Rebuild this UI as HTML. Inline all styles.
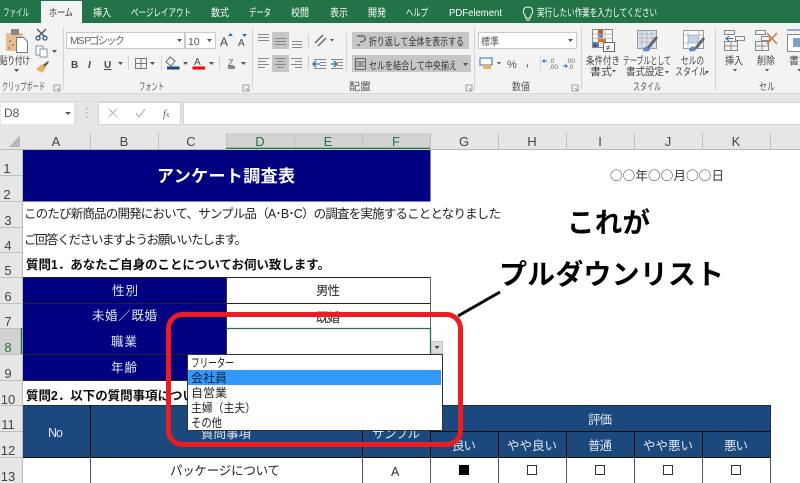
<!DOCTYPE html>
<html lang="ja"><head><meta charset="utf-8"><style>
html,body{margin:0;padding:0;background:#fff;width:800px;height:483px;overflow:hidden}
svg{display:block}
text{font-family:"Liberation Sans","Noto Sans CJK JP",sans-serif;white-space:pre}
.r{font-size:10px;fill:#444}
.h{font-size:13px;fill:#444;text-anchor:middle;font-family:"Liberation Sans",sans-serif}
.s{font-size:12.5px;fill:#222}
.w{font-size:12.5px;fill:#dfe6f2}
.a{fill:#555}
</style></head><body>
<svg width="800" height="483" viewBox="0 0 800 483" xmlns="http://www.w3.org/2000/svg">
<defs><filter id="b" x="0" y="0" width="100%" height="100%"><feGaussianBlur stdDeviation="0.35"/></filter></defs>
<rect width="800" height="483" fill="#fff"/>
<g filter="url(#b)">
<!-- title bar -->
<rect width="800" height="23" fill="#217346"/>
<rect x="41" y="1" width="41" height="23" fill="#f3f3f3"/>
<g font-size="10.5" fill="#fff">
<text x="3" y="16" textLength="26" lengthAdjust="spacingAndGlyphs" fill="#eef5f0">ファイル</text>
<text x="49" y="16" textLength="24" lengthAdjust="spacingAndGlyphs" style="fill:#333">ホーム</text>
<text x="93" y="16" textLength="18" lengthAdjust="spacingAndGlyphs">挿入</text>
<text x="131" y="16" textLength="60" lengthAdjust="spacingAndGlyphs">ページレイアウト</text>
<text x="211" y="16" textLength="18" lengthAdjust="spacingAndGlyphs">数式</text>
<text x="249" y="16" textLength="22" lengthAdjust="spacingAndGlyphs">データ</text>
<text x="291" y="16" textLength="18" lengthAdjust="spacingAndGlyphs">校閲</text>
<text x="330" y="16" textLength="18" lengthAdjust="spacingAndGlyphs">表示</text>
<text x="368" y="16" textLength="18" lengthAdjust="spacingAndGlyphs">開発</text>
<text x="406" y="16" textLength="22" lengthAdjust="spacingAndGlyphs">ヘルプ</text>
<text x="449" y="16" textLength="53" lengthAdjust="spacingAndGlyphs">PDFelement</text>
<text x="537" y="16" textLength="120" lengthAdjust="spacingAndGlyphs">実行したい作業を入力してください</text>
</g>
<path d="M525 15c-3-3-2-8 3-8s6 5 3 8l-.5 3h-5zM526 20h4" fill="none" stroke="#fff"/>
<!-- ribbon -->
<rect y="23" width="800" height="70" fill="#f3f3f3"/>
<rect y="93" width="800" height="40" fill="#e6e6e6"/>
<g fill="#d4d4d4"><rect x="63" y="27" width="1" height="63"/><rect x="252" y="27" width="1" height="63"/><rect x="474" y="27" width="1" height="63"/><rect x="581" y="27" width="1" height="63"/><rect x="715" y="27" width="1" height="63"/></g>
<!-- clipboard -->
<rect x="6" y="33" width="17" height="18" fill="#e9bd8d"/><rect x="11" y="29" width="8" height="6" fill="#888"/>
<path d="M16.500 37.500h7l4 4v11H16.500z" fill="#fff" stroke="#777"/>
<g class="a"><circle cx="10" cy="41" r=".8"/><circle cx="13" cy="45" r=".8"/><circle cx="9" cy="48" r=".8"/></g>
<path d="M37 29l8 8M46 29l-8 8" stroke="#555" stroke-width="1.3"/><circle cx="38" cy="38" r="2" fill="none" stroke="#2b5f95" stroke-width="1.3"/><circle cx="45" cy="38" r="2" fill="none" stroke="#2b5f95" stroke-width="1.3"/>
<rect x="36" y="46" width="7" height="9" fill="#fff" stroke="#7f8fa8"/><rect x="40" y="49" width="7" height="8" fill="#fff" stroke="#7f8fa8"/>
<path d="M52 50h5l-2.500 3z" class="a"/>
<path d="M36 69l6-5 4 4-4 5z" fill="#e7b35a"/><path d="M43 65l5-4 1 1-4 5z" fill="#555"/>
<text x="0" y="64" font-size="10.5" fill="#333" textLength="30" lengthAdjust="spacingAndGlyphs">貼り付け</text>
<path d="M14 69h5l-2.500 3z" class="a"/>
<text x="2" y="90" font-size="10.5" fill="#555" textLength="43" lengthAdjust="spacingAndGlyphs">クリップボード</text>
<path d="M54 85h6v6h-6zM57 88l3 3" fill="none" stroke="#888" stroke-width=".8"/>
<!-- font -->
<rect x="66.500" y="32.500" width="118" height="16" fill="#fff" stroke="#c9c9c9"/>
<rect x="185.500" y="32.500" width="30" height="16" fill="#fff" stroke="#c9c9c9"/>
<text x="70" y="44" font-size="10.5" fill="#666" textLength="55" lengthAdjust="spacing">M S  Pゴシック</text>
<text x="188" y="45" font-size="10.500" fill="#555">10</text>
<path d="M177 39h5l-2.500 3zM207 39h5l-2.500 3z" class="a"/>
<text x="220" y="46" font-size="12" fill="#444">A</text><path d="M228 36h5l-2.500-3z" fill="#2b6cb0"/>
<text x="238" y="46" font-size="10" fill="#444">A</text><path d="M242 34h5l-2.500 3z" fill="#2b6cb0"/>
<text x="71" y="68" font-size="10" font-weight="bold" fill="#444">B</text>
<text x="88" y="68" font-size="10" font-style="italic" font-weight="bold" fill="#444">I</text>
<text x="104" y="68" font-size="10" font-weight="bold" fill="#444" text-decoration="underline">U</text>
<path d="M118 62h5l-2.500 3zM150 62h5l-2.500 3zM183 62h5l-2.500 3zM209 62h5l-2.500 3zM241 62h5l-2.500 3z" class="a"/>
<path d="M135.500 58.500h11v10h-11zM141 58v11M135 63.500h12" fill="none" stroke="#777"/>
<path d="M170 57l5 4-4 5-5-4z" fill="#fff" stroke="#666"/>
<rect x="167" y="66.500" width="12.500" height="3" fill="#1f497d"/>
<text x="194" y="65" font-size="10" fill="#444">A</text>
<rect x="192.500" y="66.500" width="12.500" height="3" fill="#f00"/>
<rect x="161" y="56" width="1" height="14" fill="#d4d4d4"/><rect x="128" y="56" width="1" height="14" fill="#d4d4d4"/><rect x="219" y="56" width="1" height="14" fill="#d4d4d4"/>
<text x="228" y="66" font-size="9" fill="#555">Z</text><rect x="228" y="66" width="7" height="3" fill="#888"/>
<text x="139" y="90" font-size="10.5" fill="#555" textLength="25" lengthAdjust="spacingAndGlyphs">フォント</text>
<path d="M243 85h6v6h-6zM246 88l3 3" fill="none" stroke="#888" stroke-width=".8"/>
<!-- align -->
<rect x="272" y="32" width="17" height="17" fill="#c6c6c6"/><rect x="272" y="55" width="17" height="17" fill="#c6c6c6"/>
<path d="M258 34.500h11M258 37.500h11M258 40.500h11M275 38.500h11M275 41.500h11M275 44.500h11M292 41.500h10M292 44.500h10M292 47.500h10" stroke="#888"/>
<path d="M258 58.500h11M258 61.500h8M258 64.500h11M258 67.500h7M275 58.500h11M277 61.500h7M275 64.500h11M277 67.500h7M291 58.500h11M295 61.500h7M291 64.500h11M295 67.500h7" stroke="#888"/>
<rect x="308" y="34" width="1" height="13" fill="#cfcfcf"/><rect x="308" y="56" width="1" height="14" fill="#cfcfcf"/>
<path d="M315 43l8-8M318 46l8-8" stroke="#666" stroke-width="1.500"/><path d="M330 39h4l-2 2.500z" class="a"/>
<path d="M314 59.500h12M320 62.500h6M320 65.500h6M314 68.500h12" stroke="#888"/><path d="M314 64h6M316 61l-3 3 3 3" fill="none" stroke="#2b6cb0" stroke-width="1.300"/>
<path d="M331 59.500h12M337 62.500h6M337 65.500h6M331 68.500h12" stroke="#888"/><path d="M331 64h5M334 61l3 3-3 3" fill="none" stroke="#2b6cb0" stroke-width="1.300"/>
<rect x="346" y="33" width="1" height="38" fill="#d4d4d4"/>
<rect x="352" y="32" width="117" height="17" fill="#c6c6c6"/><rect x="352" y="55" width="119" height="17" fill="#c6c6c6"/>
<text x="369" y="45" font-size="10.5" fill="#333" textLength="95" lengthAdjust="spacingAndGlyphs">折り返して全体を表示する</text>
<text x="369" y="69" font-size="10.5" fill="#333" textLength="88" lengthAdjust="spacingAndGlyphs">セルを結合して中央揃え</text>
<path d="M357 36h7M364 36c3 3 0 6-4 6M357 45h3" fill="none" stroke="#555" stroke-width="1.200"/>
<path d="M355.500 58.500h10v11h-10zM355 62h11M355 66h11" fill="none" stroke="#666"/><path d="M358 64h5" stroke="#2b6cb0"/>
<path d="M463 63h5l-2.500 3z" class="a"/>
<text x="349" y="90" font-size="10.5" fill="#555" textLength="22" lengthAdjust="spacingAndGlyphs">配置</text>
<path d="M466 85h6v6h-6zM469 88l3 3" fill="none" stroke="#888" stroke-width=".8"/>
<!-- number -->
<rect x="478.500" y="32.500" width="98" height="16" fill="#fff" stroke="#c9c9c9"/>
<text x="481" y="45" font-size="10.5" fill="#555" textLength="18" lengthAdjust="spacingAndGlyphs">標準</text>
<path d="M568 39h5l-2.500 3z" class="a"/>
<rect x="480" y="58" width="12" height="7" fill="#fff" stroke="#2b6cb0"/><rect x="483" y="65" width="8" height="4" fill="#e7b35a"/>
<path d="M497 62h4l-2 2.500z" class="a"/>
<text x="507" y="68" font-size="11" fill="#555">%</text>
<text x="526" y="66" font-size="10" font-weight="bold" fill="#555">,</text>
<rect x="540" y="56" width="1" height="15" fill="#d4d4d4"/>
<text x="549" y="63" font-size="6.500" fill="#666">.0</text><text x="549" y="69" font-size="6.500" fill="#666">.00</text><path d="M547 61h-4l1.500-1.500M543 61l1.500 1.500" stroke="#2b6cb0" fill="none"/>
<text x="566" y="63" font-size="6.500" fill="#666">.00</text><text x="568" y="69" font-size="6.500" fill="#666">.0</text><path d="M563 66h4l-1.500-1.500M567 66l-1.500 1.500" stroke="#2b6cb0" fill="none"/>
<text x="512" y="90" font-size="10.5" fill="#555" textLength="18" lengthAdjust="spacingAndGlyphs">数値</text>
<path d="M572 85h6v6h-6zM575 88l3 3" fill="none" stroke="#888" stroke-width=".8"/>
<!-- styles -->
<rect x="592.500" y="29.500" width="20" height="18" fill="#fff" stroke="#888"/>
<rect x="598" y="30" width="5" height="4" fill="#c55a11"/><rect x="598" y="34" width="5" height="4" fill="#6d8cc0"/><rect x="598" y="39" width="8" height="3" fill="#e46c0a"/><rect x="593" y="42" width="6" height="5" fill="#3465a4"/>
<path d="M593 34h20M593 38.500h20M593 43h20M598 30v18M605 30v18" stroke="#aaa" stroke-width=".7"/>
<rect x="603.500" y="42.500" width="11" height="9" fill="#fff" stroke="#666"/><text x="606" y="50.500" font-size="8" fill="#333">≠</text>
<rect x="637.500" y="30.500" width="19" height="18" fill="#dbe3ee" stroke="#999"/>
<path d="M637 34h20M637 38h20M637 42h20M642 31v18M647 31v18M652 31v18" stroke="#aaa" stroke-width=".7"/>
<path d="M646 48l10-12 2 2-9 11z" fill="#666"/><path d="M643 51c0-4 3-5 5-4l2 2c0 2-3 3-7 2z" fill="#5b86c4"/>
<rect x="683.500" y="30.500" width="20" height="18" fill="#fff" stroke="#999"/>
<rect x="688" y="35" width="11" height="8" fill="#bfd3ea"/>
<path d="M683 35h21M683 43h21M688 31v18M699 31v18" stroke="#aaa" stroke-width=".7"/>
<path d="M694 48l9-11 2 2-8 10z" fill="#666"/><path d="M689 51c0-4 3-5 5-4l2 2c0 2-3 3-7 2z" fill="#5b86c4"/>
<g font-size="10.5" fill="#444">
<text x="586" y="64" textLength="34" lengthAdjust="spacingAndGlyphs">条件付き</text>
<text x="590" y="75" textLength="22" lengthAdjust="spacingAndGlyphs">書式</text>
<text x="623" y="64" textLength="48" lengthAdjust="spacingAndGlyphs">テーブルとして</text>
<text x="626" y="75" textLength="38" lengthAdjust="spacingAndGlyphs">書式設定</text>
<text x="681" y="64" textLength="23" lengthAdjust="spacingAndGlyphs">セルの</text>
<text x="675" y="75" textLength="32" lengthAdjust="spacingAndGlyphs">スタイル</text>
<text x="725" y="64" textLength="18" lengthAdjust="spacingAndGlyphs">挿入</text>
<text x="757" y="64" textLength="18" lengthAdjust="spacingAndGlyphs">削除</text>
<text x="789" y="64" textLength="20" lengthAdjust="spacingAndGlyphs">書式</text>
<text x="633" y="90" textLength="28" lengthAdjust="spacingAndGlyphs" fill="#555">スタイル</text>
<text x="759" y="90" textLength="16" lengthAdjust="spacingAndGlyphs" fill="#555">セル</text>
</g>
<path d="M612 70h4l-2 2.500zM665 71h4l-2 2.500zM705 71h4l-2 2.500zM733 69h4l-2 2.500zM765 69h4l-2 2.500zM797 69h3v2.500z" class="a"/>
<path d="M724.500 30.500h10v4h-10zM724.500 41.500h13v9h-13zM731 41v10M724 46h14M735.500 36.500h9v4h-9z" fill="none" stroke="#888"/>
<path d="M726 38.500h7M729 36l-3 2.500 3 2.500" fill="none" stroke="#2b6cb0"/>
<path d="M755.500 30.500h10v4h-10zM755.500 41.500h13v9h-13zM762 41v10M755 46h14M761.500 36.500h8v4h-8z" fill="none" stroke="#888"/>
<path d="M767 33l10 11M777 33l-10 11" stroke="#d9773d" stroke-width="1.500"/>
<path d="M787 30h13" stroke="#2b6cb0"/><rect x="787.500" y="34.500" width="13" height="17" fill="#fff" stroke="#888"/><rect x="793" y="38" width="7" height="9" fill="#7f9fcb"/>
<!-- formula bar -->
<path d="M0 93.500h800M0 101.500h184" stroke="#d9d9d9"/>
<rect x="0" y="102" width="75" height="23" fill="#fff" stroke="#d4d4d4"/>
<text x="4" y="117" font-size="12" fill="#555">D8</text>
<path d="M65 112h6l-3 3z" class="a"/>
<g fill="#aaa"><rect x="86" y="108" width="1.500" height="1.500"/><rect x="86" y="112" width="1.500" height="1.500"/><rect x="86" y="116" width="1.500" height="1.500"/></g>
<rect x="98.500" y="102.500" width="82" height="22" fill="#fff" stroke="#d4d4d4"/>
<path d="M109 109l8 8M117 109l-8 8" stroke="#bbb" stroke-width="1.200"/>
<path d="M136 113l3 4 6-8" stroke="#bbb" stroke-width="1.300" fill="none"/>
<text x="163" y="117" font-size="10.500" font-style="italic" fill="#666" style="font-family:'Liberation Serif',serif">f<tspan font-size="8">x</tspan></text>
<rect x="183.500" y="102.500" width="617" height="22" fill="#fff" stroke="#d4d4d4"/>
<rect y="125" width="800" height="8" fill="#e6e6e6"/>
<!-- headers -->
<rect y="133" width="800" height="16" fill="#e6e6e6"/>
<rect y="149" width="23" height="334" fill="#e6e6e6"/>
<rect x="226" y="133" width="204" height="16" fill="#d2d2d2"/>
<rect y="328" width="22" height="26" fill="#d2d2d2"/>
<path d="M9 147h11v-12z" fill="#b8b8b8"/>
<path d="M0 149.500h226M430 149.500h370" stroke="#bbb"/>
<path d="M90.500 133v16M158.500 133v16M226.500 133v16M294.500 133v16M362.500 133v16M430.500 133v16M498.500 133v16M566.500 133v16M634.500 133v16M702.500 133v16M770.500 133v16" stroke="#c0c0c0"/>
<path d="M226 148.500h204" stroke="#217346" stroke-width="1.500"/>
<path d="M0 175.500h22M0 201.500h22M0 227.500h22M0 252.500h22M0 277.500h22M0 303.500h22M0 328.500h22M0 354.500h22M0 380.500h22M0 405.500h22M0 431.500h22M0 457.500h22" stroke="#c0c0c0"/>
<path d="M22.500 149v334" stroke="#bbb"/>
<path d="M21.500 328v26" stroke="#217346" stroke-width="1.500"/>
<g>
<text class="h" x="56" y="146">A</text><text class="h" x="124" y="146">B</text><text class="h" x="191" y="146">C</text>
<text class="h" x="260" y="146" style="fill:#217346">D</text><text class="h" x="328" y="146" style="fill:#217346">E</text><text class="h" x="396" y="146" style="fill:#217346">F</text>
<text class="h" x="464" y="146">G</text><text class="h" x="532" y="146">H</text><text class="h" x="600" y="146">I</text><text class="h" x="668" y="146">J</text><text class="h" x="736" y="146">K</text>
<text class="h" x="7" y="173">1</text><text class="h" x="7" y="199">2</text><text class="h" x="8" y="225">3</text><text class="h" x="8" y="250">4</text><text class="h" x="8" y="275">5</text><text class="h" x="8" y="301">6</text><text class="h" x="8" y="326">7</text>
<text class="h" x="8" y="352" style="fill:#217346">8</text><text class="h" x="8" y="378">9</text><text class="h" x="8" y="404">10</text><text class="h" x="8" y="429">11</text><text class="h" x="8" y="455">12</text><text class="h" x="8" y="481">13</text>
</g>
<!-- sheet -->
<rect x="23" y="150" width="407.500" height="51.500" fill="#000080"/>
<text x="157" y="182" font-size="17" font-weight="bold" fill="#fff" textLength="138">アンケート調査表</text>
<text x="610" y="180" font-size="12.500" fill="#333" textLength="114" style="font-family:'Noto Sans CJK JP',sans-serif">○○年○○月○○日</text>
<text x="24" y="218" class="s" textLength="477">このたび新商品の開発において、サンプル品（A･B･C）の調査を実施することとなりました</text>
<text x="24" y="244" class="s" textLength="223">ご回答くださいますようお願いいたします。</text>
<text x="26" y="269" class="s" font-weight="bold" style="fill:#111" textLength="304">質問1．あなたご自身のことについてお伺い致します。</text>
<text x="26" y="400" class="s" font-weight="bold" style="fill:#111" textLength="280">質問2．以下の質問事項についてお答えください。</text>
<!-- form -->
<rect x="23" y="277" width="203" height="103" fill="#000080"/>
<path d="M23 277.500h407M23 303.500h407M23 354.500h203M23 380.500h407" stroke="#222"/>
<path d="M226 354.500h204M430.500 277v103" stroke="#666"/>
<path d="M226.500 277v103" stroke="#333"/>
<text x="112" y="295" class="w" textLength="26">性別</text>
<text x="92" y="320" class="w" textLength="65">未婚／既婚</text>
<text x="111" y="346" class="w" textLength="26">職業</text>
<text x="111" y="372" class="w" textLength="26">年齢</text>
<text x="316" y="295" class="s" textLength="24">男性</text>
<text x="316" y="322" class="s" textLength="24" font-size="11">既婚</text>
<path d="M226 328.500h204.500v26" fill="none" stroke="#217346" stroke-width="1.300"/>
<!-- dropdown button -->
<rect x="431.500" y="341.500" width="11" height="12" fill="#ddd" stroke="#c4c4c4"/>
<path d="M434.500 346h5l-2.500 3z" fill="#444"/>
<!-- table -->
<rect x="23" y="405.500" width="748" height="51.500" fill="#1f497d"/>
<rect x="23" y="405" width="748" height="1" fill="#1a2f4f"/>
<path d="M90.500 405v78M362.500 405v78M430.500 405v78" stroke="#111"/>
<path d="M498.500 431v26M566.500 431v26M634.500 431v26M702.500 431v26M430 431.500h340M23 457.500h748" stroke="#111"/>
<path d="M770.500 405v52" stroke="#1a2f4f"/>
<path d="M90.500 457v26M362.500 457v26M430.500 457v26M498.500 457v26M566.500 457v26M634.500 457v26M702.500 457v26M770.500 457v26" stroke="#555"/>
<text x="48" y="437" class="w" textLength="15" font-size="11">No</text>
<text x="201" y="438" class="w" textLength="50">質問事項</text>
<text x="372" y="438" class="w" textLength="48">サンプル</text>
<text x="588" y="424" class="w" textLength="24">評価</text>
<text x="452" y="450" class="w" textLength="24">良い</text>
<text x="507" y="450" class="w" textLength="50">やや良い</text>
<text x="588" y="450" class="w" textLength="24">普通</text>
<text x="643" y="450" class="w" textLength="50">やや悪い</text>
<text x="724" y="450" class="w" textLength="24">悪い</text>
<text x="170" y="475" class="s" textLength="110">パッケージについて</text>
<text x="391" y="476" font-size="12.5" fill="#333">A</text>
<rect x="459" y="465" width="10" height="10" fill="#000"/>
<g fill="#fff" stroke="#333"><rect x="527.500" y="465.500" width="9" height="9"/><rect x="595.500" y="465.500" width="9" height="9"/><rect x="663.500" y="465.500" width="9" height="9"/><rect x="731.500" y="465.500" width="9" height="9"/></g>
<!-- dropdown -->
<rect x="187.500" y="354.500" width="255" height="76" fill="#fff" stroke="#333"/>
<rect x="188" y="370" width="253" height="15" fill="#3399ff"/>
<g font-size="12" fill="#222">
<text x="191" y="367" textLength="43" lengthAdjust="spacingAndGlyphs">フリーター</text>
<text x="191" y="382" textLength="36" lengthAdjust="spacingAndGlyphs" style="fill:#123">会社員</text>
<text x="191" y="397" textLength="36" lengthAdjust="spacingAndGlyphs">自営業</text>
<text x="191" y="412" textLength="65" lengthAdjust="spacingAndGlyphs">主婦（主夫）</text>
<text x="191" y="427" textLength="31" lengthAdjust="spacingAndGlyphs">その他</text>
</g>
<!-- annotations -->
<rect x="168.500" y="314.500" width="292" height="130" rx="14" fill="none" stroke="#ed1c24" stroke-width="5"/>
<path d="M458 316l42-24" stroke="#000" stroke-width="3"/>
<text x="567" y="232" font-size="27.500" font-weight="bold" fill="#000" textLength="83">これが</text>
<text x="499" y="284" font-size="28" font-weight="bold" fill="#000" textLength="225">プルダウンリスト</text>
</g>
</svg>
</body></html>
